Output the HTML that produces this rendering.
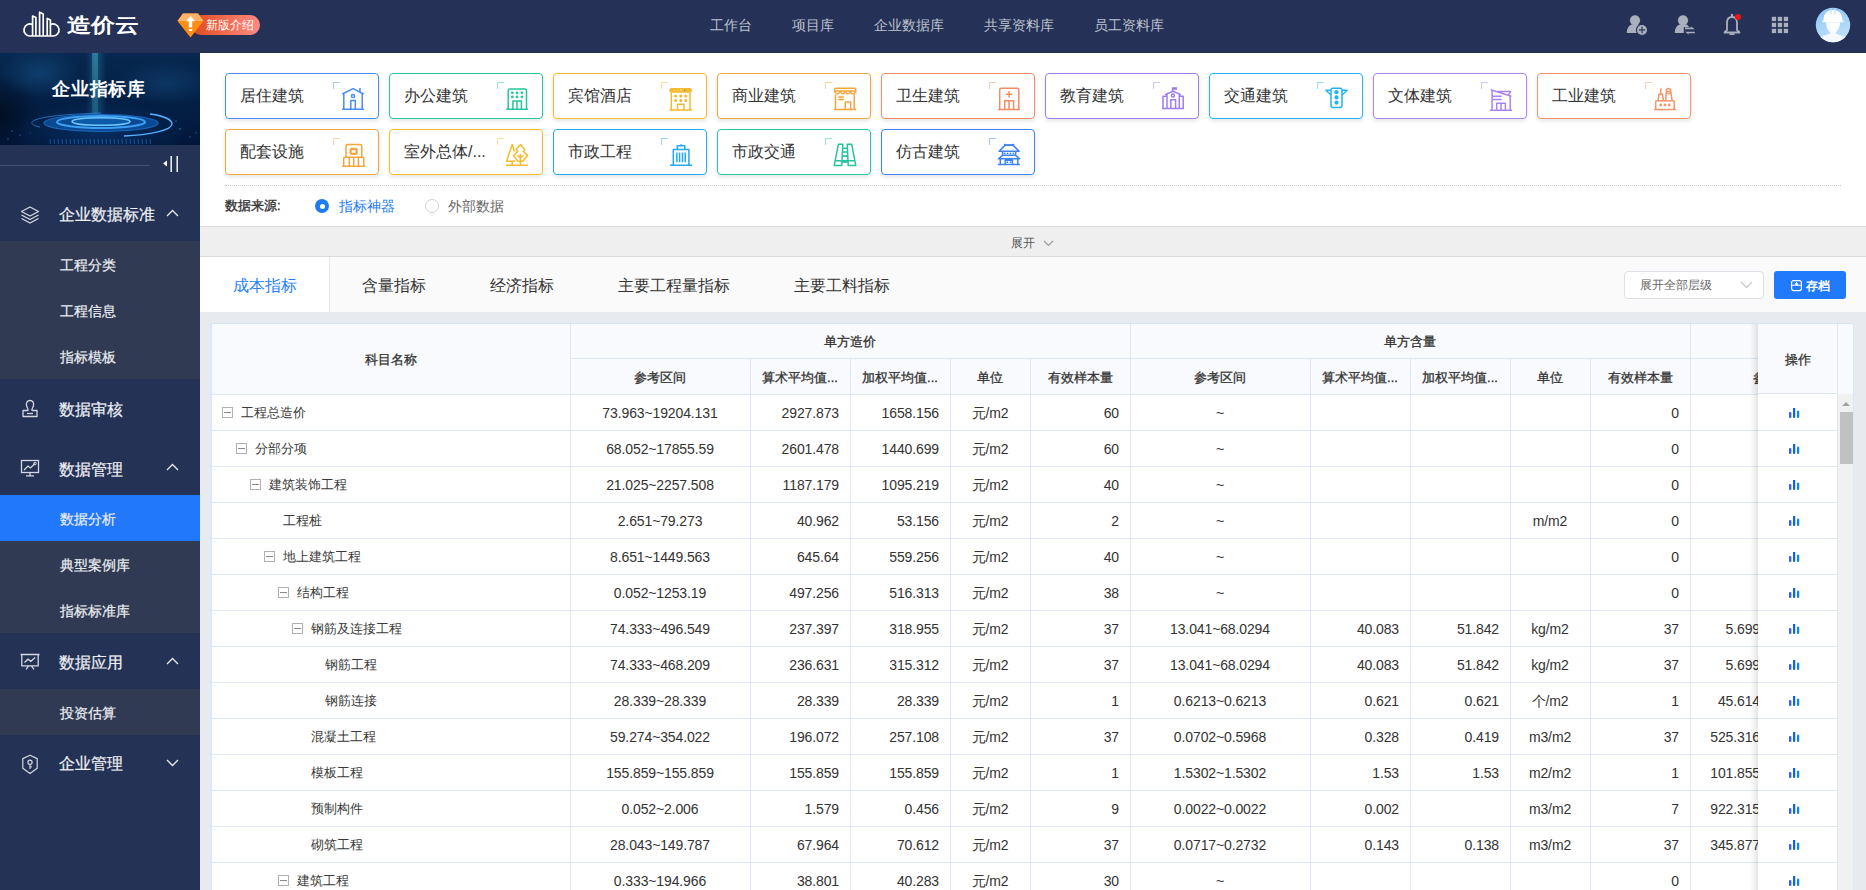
<!DOCTYPE html><html><head><meta charset="utf-8"><style>
*{box-sizing:border-box;margin:0;padding:0}
html,body{width:1866px;height:890px;overflow:hidden;background:#e7eaef;font-family:"Liberation Sans",sans-serif;color:#333}
.abs{position:absolute}
.t{position:absolute;white-space:nowrap;line-height:20px}
#top{position:absolute;left:0;top:0;width:1866px;height:53px;background:#253156}
#side{position:absolute;left:0;top:53px;width:200px;height:837px;background:#243256}
.nav{position:absolute;top:15px;font-size:14px;color:#bcc2d0;line-height:20px}
.card{position:absolute;width:154px;height:46px;border:1px solid;border-radius:4px;background:#fff;box-shadow:0 2px 4px rgba(0,0,0,.10)}
.card .lb{position:absolute;left:14px;top:12px;font-size:16px;line-height:20px;color:#333}
.card .cr{position:absolute;left:106.5px;top:8.2px;width:7.5px;height:7px;border-left:1.5px solid;border-top:1.5px solid;opacity:.45}
.card svg{position:absolute;left:115px;top:13px}
.menu{position:absolute;left:59px;font-size:16px;font-weight:500;color:#eef0f5;line-height:20px;-webkit-text-stroke:.2px #eef0f5}
.sub{position:absolute;left:60px;font-size:14px;font-weight:500;color:#eceef3;line-height:20px;-webkit-text-stroke:.2px #eceef3}
.tab{position:absolute;top:276px;font-size:16px;line-height:20px;color:#333}
.hc{position:absolute;font-size:13px;font-weight:500;-webkit-text-stroke:0.3px #333;color:#333;text-align:center;line-height:20px;white-space:nowrap}
.vl{position:absolute;width:1px;background:#dfe7f7}
.hl{position:absolute;height:1px;background:#dfe7f7}
.c{position:absolute;font-size:14px;letter-spacing:-0.12px;line-height:20px;color:#333;white-space:nowrap}
.nm{position:absolute;font-size:13px;line-height:20px;color:#3a3a3a;white-space:nowrap}
.bx{position:absolute;width:11px;height:11px;border:1px solid #b0b0b0}
.bx:after{content:"";position:absolute;left:1px;top:4px;width:7px;height:1px;background:#8a8a8a}
</style></head><body>

<div id="top">
<svg class="abs" style="left:22px;top:10px" width="40" height="28" viewBox="0 0 40 28">
<g fill="none" stroke="#fff" stroke-width="1.7" stroke-linejoin="round">
<path d="M10.6 14.6 A 6 6 0 1 0 8 26 H 31 A 6 6 0 1 0 28.4 14.6"/>
<path d="M10.6 26 V 6 L 13.9 7.6 V 26"/>
<path d="M17.6 26 V 2.2 L 21.2 4 V 26"/>
<path d="M25.2 26 V 8.4 L 28.4 10 V 26"/>
</g></svg>
<div class="t" style="left:67px;top:15px;font-size:20px;line-height:20px;font-weight:bold;color:#fff;transform:scaleX(1.2);transform-origin:0 0">造价云</div>
<div class="abs" style="left:191px;top:15px;width:69px;height:20px;border-radius:10px;background:linear-gradient(90deg,#de4a1e,#f4725a 60%,#ff8a84)"></div>
<svg class="abs" style="left:177px;top:13px" width="27" height="25" viewBox="0 0 27 25">
<path d="M6 0.5 H21 L26.5 8 L13.5 24.5 L0.5 8 Z" fill="#ff8f14"/>
<path d="M6 0.5 H21 L26.5 8 H0.5 Z" fill="#ffb366"/>
<path d="M13.5 3 L18 8.2 H15.2 V14.5 H11.8 V8.2 H9 Z" fill="#fff"/>
<rect x="11.8" y="16" width="3.4" height="2" fill="#fff"/>
</svg>
<div class="t" style="left:206px;top:15px;font-size:12px;color:#fff">新版介绍</div>
<div class="nav" style="left:710px">工作台</div>
<div class="nav" style="left:792px">项目库</div>
<div class="nav" style="left:874px">企业数据库</div>
<div class="nav" style="left:984px">共享资料库</div>
<div class="nav" style="left:1094px">员工资料库</div>
<svg class="abs" style="left:1620px;top:8px" width="32" height="32" viewBox="0 0 32 32">
<circle cx="15" cy="12.3" r="5.1" fill="#a9afbd"/>
<path d="M6.8 25 C6.8 19.5 9.5 16.5 13 16.2 H17.5 C19 16.5 20 17.2 20.5 18 C17.5 19.5 16.5 22 17 25 Z" fill="#a9afbd"/>
<circle cx="22" cy="22" r="5.6" fill="#a9afbd" stroke="#253156" stroke-width="1.1"/>
<path d="M22 18.8 V25.2 M18.8 22 H25.2" stroke="#3d4866" stroke-width="1.4"/>
</svg>
<svg class="abs" style="left:1668px;top:8px" width="32" height="32" viewBox="0 0 32 32">
<circle cx="15" cy="12.3" r="5.1" fill="#a9afbd"/>
<path d="M6.8 25 C6.8 19.5 9.5 16.5 13 16.2 H17.5 C19 16.5 20 17.2 21 18.5 L17.5 20.5 C16.5 22 16.3 23.5 16.5 25 Z" fill="#a9afbd"/>
<path d="M15.8 19.2 H27.5 V26.8 H15.8 Z" fill="#253156"/>
<path d="M17 19.6 H23.5 L23 18.2 L26.8 21.2 H17 Z" fill="#a9afbd"/>
<path d="M26.8 23.7 H20.3 L20.8 25.1 L17 22.1 H26.8 Z" fill="#a9afbd" transform="translate(0,1.6)"/>
</svg>
<svg class="abs" style="left:1722px;top:13px" width="22" height="23" viewBox="0 0 22 23">
<path d="M10 4 C6.5 4 5 6.5 5 10 V17 L2.5 19.5 H17.5 L15 17 V10 C15 6.5 13.5 4 10 4 Z" fill="none" stroke="#a9afbd" stroke-width="1.8" stroke-linejoin="round"/>
<path d="M8.2 21.2 H11.8" stroke="#a9afbd" stroke-width="1.8" stroke-linecap="round"/>
<path d="M10 1.8 V4" stroke="#a9afbd" stroke-width="2.2" stroke-linecap="round"/>
<circle cx="16" cy="4.1" r="3" fill="#f01414"/>
</svg>
<svg class="abs" style="left:1771px;top:16px" width="19" height="18" viewBox="0 0 19 18">
<g fill="#a9afbd">
<rect x="0.8" y="0.8" width="4.3" height="4.3"/>
<rect x="6.8" y="0.8" width="4.3" height="4.3"/>
<rect x="12.8" y="0.8" width="4.3" height="4.3"/>
<rect x="0.8" y="6.8" width="4.3" height="4.3"/>
<rect x="6.8" y="6.8" width="4.3" height="4.3"/>
<rect x="12.8" y="6.8" width="4.3" height="4.3"/>
<rect x="0.8" y="12.8" width="4.3" height="4.3"/>
<rect x="6.8" y="12.8" width="4.3" height="4.3"/>
<rect x="12.8" y="12.8" width="4.3" height="4.3"/>
</g></svg>
<svg class="abs" style="left:1815px;top:7px" width="36" height="36" viewBox="0 0 36 36">
<defs><linearGradient id="av" x1="0" y1="0" x2="0.3" y2="1"><stop offset="0" stop-color="#86c4f6"/><stop offset="1" stop-color="#c2e1fb"/></linearGradient>
<linearGradient id="av2" x1="0" y1="0" x2="0" y2="1"><stop offset="0" stop-color="#fff"/><stop offset="1" stop-color="#eef6fe"/></linearGradient>
<clipPath id="avc"><circle cx="18" cy="18" r="17.2"/></clipPath></defs>
<circle cx="18" cy="18" r="17.2" fill="url(#av)"/>
<g clip-path="url(#avc)">
<path d="M8.5 13.5 C8.5 7 12 3 18 3 C24 3 27.5 7 27.5 13.5 H28.5 V15.2 H7.5 V13.5 Z" fill="#fff"/>
<path d="M16 1 V7.5 M20 1 V7.5" stroke="#bfe0fb" stroke-width="1.2"/>
<path d="M11 15.2 H25 C25 19.5 23.5 23 20.4 26.2 C23.5 28 29 29 34 31.5 V40 H2 V31.5 C7 29 12.5 28 15.6 26.2 C12.5 23 11 19.5 11 15.2 Z" fill="url(#av2)"/>
</g>
</svg>
</div>
<div id="side"></div>
<div class="abs" style="left:0;top:53px;width:200px;height:92px;overflow:hidden;background:
radial-gradient(ellipse 40px 25px at 40px 20px,rgba(30,110,170,.35),rgba(30,110,170,0)),
radial-gradient(ellipse 50px 22px at 165px 30px,rgba(30,100,160,.30),rgba(30,100,160,0)),
radial-gradient(ellipse 90px 30px at 100px 78px,rgba(10,70,140,.45),rgba(10,70,140,0)),
radial-gradient(ellipse 40px 40px at 0px 60px,rgba(0,5,15,.6),rgba(0,5,15,0)),
linear-gradient(180deg,#072850 0%,#042046 50%,#02173a 100%)">
<div class="abs" style="left:86px;top:0;width:20px;height:78px;background:linear-gradient(90deg,rgba(40,150,200,0),rgba(60,180,220,.28),rgba(40,150,200,0))"></div>
<div class="abs" style="left:92px;top:0;width:6px;height:70px;background:linear-gradient(180deg,rgba(90,210,230,.35),rgba(90,210,230,.10))"></div>
<svg class="abs" style="left:0;top:0" width="200" height="92" viewBox="0 0 200 92">
<path d="M40 74 C 22 70, 30 62, 101 60" stroke="#2a7fd0" stroke-width="1" fill="none" opacity=".8"/>
<ellipse cx="101" cy="70" rx="57" ry="8.5" fill="#0b4a93"/>
<ellipse cx="101" cy="70" rx="57" ry="8.5" fill="none" stroke="#1c66b8" stroke-width="1.2"/>
<ellipse cx="101" cy="69" rx="44" ry="6" fill="none" stroke="#3d9ff2" stroke-width="2.2"/>
<ellipse cx="101" cy="68.5" rx="29" ry="3.8" fill="#0c5aa8" stroke="#6cc6ff" stroke-width="1.6"/>
<path d="M124 83 C150 82 172 77 172 71 C172 67 165 63 150 61" stroke="#5ab0ff" stroke-width="1.4" fill="none"/>
<g stroke="#2a78c8" stroke-width="1.2" opacity=".5">
<line x1="50" y1="86" x2="50.4" y2="91"/>
<line x1="54" y1="86" x2="54.4" y2="91"/>
<line x1="58" y1="86" x2="58.4" y2="91"/>
<line x1="62" y1="86" x2="62.4" y2="91"/>
<line x1="66" y1="86" x2="66.4" y2="91"/>
<line x1="70" y1="86" x2="70.4" y2="91"/>
<line x1="74" y1="86" x2="74.4" y2="91"/>
<line x1="78" y1="86" x2="78.4" y2="91"/>
<line x1="82" y1="86" x2="82.4" y2="91"/>
<line x1="86" y1="86" x2="86.4" y2="91"/>
<line x1="90" y1="86" x2="90.4" y2="91"/>
<line x1="94" y1="86" x2="94.4" y2="91"/>
<line x1="98" y1="86" x2="98.4" y2="91"/>
<line x1="102" y1="86" x2="102.4" y2="91"/>
<line x1="106" y1="86" x2="106.4" y2="91"/>
<line x1="110" y1="86" x2="110.4" y2="91"/>
<line x1="114" y1="86" x2="114.4" y2="91"/>
<line x1="118" y1="86" x2="118.4" y2="91"/>
<line x1="122" y1="86" x2="122.4" y2="91"/>
<line x1="126" y1="86" x2="126.4" y2="91"/>
<line x1="130" y1="86" x2="130.4" y2="91"/>
<line x1="134" y1="86" x2="134.4" y2="91"/>
<line x1="138" y1="86" x2="138.4" y2="91"/>
<line x1="142" y1="86" x2="142.4" y2="91"/>
<line x1="146" y1="86" x2="146.4" y2="91"/>
<line x1="150" y1="86" x2="150.4" y2="91"/>
</g>
<g fill="#4aa0e0" opacity=".5"><circle cx="12" cy="78" r=".8"/><circle cx="20" cy="82" r=".7"/><circle cx="8" cy="86" r=".8"/><circle cx="30" cy="80" r=".6"/><circle cx="180" cy="76" r=".9"/><circle cx="190" cy="84" r=".8"/><circle cx="196" cy="80" r=".7"/><circle cx="176" cy="68" r=".8"/></g>
</svg>
<div class="t" style="left:52px;top:26px;font-size:18px;line-height:20px;font-weight:bold;color:#fff;letter-spacing:.8px">企业指标库</div>
</div>
<div class="abs" style="left:0;top:165px;width:150px;height:1px;background:#45506f"></div>
<svg class="abs" style="left:162px;top:155px" width="18" height="18" viewBox="0 0 18 18">
<path d="M1 8.5 L5 5.5 V11.5 Z" fill="#fff"/><rect x="8.5" y="1" width="1.4" height="16" fill="#fff"/><rect x="14.5" y="1" width="1.4" height="16" fill="#fff"/>
</svg>
<div class="abs" style="left:0;top:241px;width:200px;height:138px;background:#303a52"></div>
<div class="abs" style="left:0;top:495px;width:200px;height:138px;background:#303a52"></div>
<div class="abs" style="left:0;top:495px;width:200px;height:46px;background:#2178fb"></div>
<div class="abs" style="left:0;top:689px;width:200px;height:46px;background:#303a52"></div>
<div class="menu" style="top:205.2px">企业数据标准</div>
<div class="menu" style="top:399.7px">数据审核</div>
<div class="menu" style="top:459.7px">数据管理</div>
<div class="menu" style="top:653.2px">数据应用</div>
<div class="menu" style="top:754.2px">企业管理</div>
<div class="sub" style="top:254.5px">工程分类</div>
<div class="sub" style="top:300.5px">工程信息</div>
<div class="sub" style="top:346.5px">指标模板</div>
<div class="sub" style="top:508.5px">数据分析</div>
<div class="sub" style="top:554.5px">典型案例库</div>
<div class="sub" style="top:600.5px">指标标准库</div>
<div class="sub" style="top:702.5px">投资估算</div>
<svg class="abs" style="left:166px;top:209px" width="13" height="9" viewBox="0 0 13 9"><path d="M1 7 L6.5 1.5 L12 7" stroke="#e6e8ee" stroke-width="1.4" fill="none"/></svg>
<svg class="abs" style="left:166px;top:463px" width="13" height="9" viewBox="0 0 13 9"><path d="M1 7 L6.5 1.5 L12 7" stroke="#e6e8ee" stroke-width="1.4" fill="none"/></svg>
<svg class="abs" style="left:166px;top:657px" width="13" height="9" viewBox="0 0 13 9"><path d="M1 7 L6.5 1.5 L12 7" stroke="#e6e8ee" stroke-width="1.4" fill="none"/></svg>
<svg class="abs" style="left:166px;top:758px" width="13" height="9" viewBox="0 0 13 9"><path d="M1 2 L6.5 7.5 L12 2" stroke="#e6e8ee" stroke-width="1.4" fill="none"/></svg>
<svg class="abs" style="left:20px;top:206px" width="20" height="19" viewBox="0 0 20 19">
<path d="M10 1 L18.5 5.5 L10 10 L1.5 5.5 Z" fill="none" stroke="#d4d8e2" stroke-width="1.3" stroke-linejoin="round"/>
<path d="M1.5 9 L10 13.5 L18.5 9" fill="none" stroke="#d4d8e2" stroke-width="1.3" stroke-linejoin="round"/>
<path d="M1.5 12.5 L10 17 L18.5 12.5" fill="none" stroke="#d4d8e2" stroke-width="1.3" stroke-linejoin="round"/>
</svg>
<svg class="abs" style="left:20px;top:399px" width="20" height="20" viewBox="0 0 20 20">
<path d="M10 1.5 C7 1.5 6 4 6.5 6.5 C7 8.5 8.5 9.5 8 11.5 H3 V17.5 H17 V11.5 H12 C11.5 9.5 13 8.5 13.5 6.5 C14 4 13 1.5 10 1.5 Z" fill="none" stroke="#d4d8e2" stroke-width="1.3" stroke-linejoin="round"/>
<path d="M7 14.5 H13" stroke="#d4d8e2" stroke-width="1.3"/>
</svg>
<svg class="abs" style="left:20px;top:459px" width="20" height="18" viewBox="0 0 20 18">
<rect x="1.5" y="1.5" width="17" height="12" fill="none" stroke="#d4d8e2" stroke-width="1.3"/>
<path d="M4 11 L8 7 L10.5 9 L15 4.5" fill="none" stroke="#d4d8e2" stroke-width="1.3"/>
<circle cx="15" cy="4.5" r="1.3" fill="none" stroke="#d4d8e2" stroke-width="1"/>
<path d="M10 13.5 V16.5 M6 16.8 H14" stroke="#d4d8e2" stroke-width="1.3"/>
</svg>
<svg class="abs" style="left:20px;top:653px" width="20" height="18" viewBox="0 0 20 18">
<path d="M0.5 1.5 H19.5 M1.8 1.5 V12.8 H18.2 V1.5" fill="none" stroke="#d4d8e2" stroke-width="1.3"/>
<path d="M4.5 9.5 L8 6.2 L10.8 8.3 L15.2 4.5" fill="none" stroke="#d4d8e2" stroke-width="1.3"/>
<path d="M8.5 12.8 L6 16.5 M11.5 12.8 L14 16.5" stroke="#d4d8e2" stroke-width="1.3"/>
</svg>
<svg class="abs" style="left:21px;top:754px" width="18" height="21" viewBox="0 0 18 21">
<path d="M9 1.2 L16.2 4.6 V14.2 L9 19.6 L1.8 14.2 V4.6 Z" fill="none" stroke="#d4d8e2" stroke-width="1.2" stroke-linejoin="round"/>
<circle cx="9" cy="8.3" r="2.1" fill="none" stroke="#d4d8e2" stroke-width="1.2"/>
<path d="M9 10.4 V15 M9 12.8 H10.8" stroke="#d4d8e2" stroke-width="1.2"/>
</svg>
<div class="abs" style="left:200px;top:53px;width:1666px;height:173px;background:#fff"></div>
<div class="card" style="left:225px;top:73px;border-color:#4a8cf5"><div class="lb">居住建筑</div><div class="cr" style="border-color:#4a8cf5"></div><svg width="24" height="24" viewBox="0 0 24 24"><path d="M1 22.3 H23 M2.8 22.3 V6.8 M21.2 22.3 V6.8 M1.3 7 L12 1.6 L22.7 7 M19 4.8 V1 M9.8 22.3 V13.6 H14.3 V22.3" stroke="#4a8cf5" stroke-width="1.5" fill="none" stroke-linejoin="round"/><circle cx="12" cy="9" r="1.6" stroke="#4a8cf5" stroke-width="1.5" fill="none" stroke-linejoin="round"/></svg></div>
<div class="card" style="left:389px;top:73px;border-color:#27c4a2"><div class="lb">办公建筑</div><div class="cr" style="border-color:#27c4a2"></div><svg width="24" height="24" viewBox="0 0 24 24"><path d="M1.2 22.3 H23 M3.2 22.3 V3.5 Q3.2 2 4.7 2 H20 Q21.5 2 21.5 3.5 V22.3 M7.9 22.3 V14 H16.4 V22.3 M12 14 V22.3" stroke="#27c4a2" stroke-width="1.5" fill="none" stroke-linejoin="round"/><circle cx="7.3" cy="5.8" r="1.4" fill="#27c4a2"/><circle cx="12" cy="5.8" r="1.4" fill="#27c4a2"/><circle cx="16.9" cy="5.8" r="1.4" fill="#27c4a2"/><circle cx="7.3" cy="9.9" r="1.4" fill="#27c4a2"/><circle cx="12" cy="9.9" r="1.4" fill="#27c4a2"/><circle cx="16.9" cy="9.9" r="1.4" fill="#27c4a2"/></svg></div>
<div class="card" style="left:553px;top:73px;border-color:#f5b82e"><div class="lb">宾馆酒店</div><div class="cr" style="border-color:#f5b82e"></div><svg width="24" height="24" viewBox="0 0 24 24"><path d="M0.5 23 H23 M2.3 5.8 V23 M21 5.8 V23 M8.6 23 V17.3 H15 V23" stroke="#f5b82e" stroke-width="1.5" fill="none" stroke-linejoin="round"/><rect x="0.3" y="1" width="22.6" height="4.8" rx="2" fill="#f5b82e"/><path d="M5 3.4 H7 M9 2.5 V4.4 M11 2.5 H13 M12 2.5 V4.4 M15 2.5 V4.4 H17" stroke="#fff" stroke-width=".6" opacity=".7"/><circle cx="6.6" cy="9.1" r="1.5" fill="#f5b82e"/><circle cx="11.8" cy="9.1" r="1.5" fill="#f5b82e"/><circle cx="16.8" cy="9.1" r="1.5" fill="#f5b82e"/><circle cx="6.6" cy="13.5" r="1.5" fill="#f5b82e"/><circle cx="11.8" cy="13.5" r="1.5" fill="#f5b82e"/><circle cx="16.8" cy="13.5" r="1.5" fill="#f5b82e"/></svg></div>
<div class="card" style="left:717px;top:73px;border-color:#f5a53d"><div class="lb">商业建筑</div><div class="cr" style="border-color:#f5a53d"></div><svg width="24" height="24" viewBox="0 0 24 24"><path d="M1 22.4 H23 M2.5 7.5 V22.4 M21.2 7.5 V22.4 M1.8 5.5 V2.2 Q1.8 1.2 2.8 1.2 H21.8 Q22.8 1.2 22.8 2.2 V5.5 M1.8 4 H22.8 M1.8 4.5 Q4.5 9.5 7.2 4.5 Q9.9 9.5 12.3 4.5 Q14.7 9.5 17.3 4.5 Q20 9.5 22.8 4.5 M5.2 9.9 H10.8 M5.2 12.6 H10.8 M12.3 22.4 V15.1 H17.7 V22.4" stroke="#f5a53d" stroke-width="1.5" fill="none" stroke-linejoin="round"/></svg></div>
<div class="card" style="left:881px;top:73px;border-color:#f68b64"><div class="lb">卫生建筑</div><div class="cr" style="border-color:#f68b64"></div><svg width="24" height="24" viewBox="0 0 24 24"><path d="M1 22.4 H23 M2.7 22.4 V2.8 Q2.7 1.3 4.2 1.3 H20.3 Q21.8 1.3 21.8 2.8 V22.4 M7.7 22.4 V13.7 H16.6 V22.4 M12 13.7 V22.4 M12.1 4 V10.4 M8.8 7.2 H15.4" stroke="#f68b64" stroke-width="1.5" fill="none" stroke-linejoin="round"/></svg></div>
<div class="card" style="left:1045px;top:73px;border-color:#9d7cf2"><div class="lb">教育建筑</div><div class="cr" style="border-color:#9d7cf2"></div><svg width="24" height="24" viewBox="0 0 24 24"><path d="M1 21.4 H23 M4 7.6 L12 4.3 L20 7.6 M6 7.2 V21.4 M18.3 7.2 V21.4 M2 21.4 V9.3 H6 M22.2 21.4 V9.3 H18.3 M9.8 21.4 V12.8 H14.6 V21.4 M11.6 4 V0.5" stroke="#9d7cf2" stroke-width="1.5" fill="none" stroke-linejoin="round"/><rect x="11.6" y="0.2" width="4.4" height="2.6" fill="#9d7cf2"/><circle cx="12" cy="8.5" r="1.5" stroke="#9d7cf2" stroke-width="1.5" fill="none" stroke-linejoin="round"/></svg></div>
<div class="card" style="left:1209px;top:73px;border-color:#22b4ee"><div class="lb">交通建筑</div><div class="cr" style="border-color:#22b4ee"></div><svg width="24" height="24" viewBox="0 0 24 24"><rect x="6" y="1.2" width="11" height="19.2" rx="1.8" stroke="#22b4ee" stroke-width="1.5" fill="none" stroke-linejoin="round"/><path d="M6 3.3 H0.9 L6 8 M17 3.3 H22.1 L17 8" stroke="#22b4ee" stroke-width="1.5" fill="none" stroke-linejoin="round"/><circle cx="11.5" cy="5.2" r="2.1" fill="#22b4ee"/><circle cx="11.5" cy="10.4" r="2.1" fill="#22b4ee"/><circle cx="11.5" cy="15.6" r="2.1" fill="#22b4ee"/></svg></div>
<div class="card" style="left:1373px;top:73px;border-color:#a884f0"><div class="lb">文体建筑</div><div class="cr" style="border-color:#a884f0"></div><svg width="24" height="24" viewBox="0 0 24 24"><path d="M1 23.2 H23 M1.7 2.7 L22.4 9.3 M8.3 4.6 H21.6 L19.5 7.9 M3.1 3.2 V23.2 M21.2 9 V23.2 M3.3 9.3 H12.7 M3.3 12.4 H12.7 M7.7 23.2 V16.2 H16.4 V23.2 M12 16.2 V23.2" stroke="#a884f0" stroke-width="1.5" fill="none" stroke-linejoin="round"/></svg></div>
<div class="card" style="left:1537px;top:73px;border-color:#f69468"><div class="lb">工业建筑</div><div class="cr" style="border-color:#f69468"></div><svg width="24" height="24" viewBox="0 0 24 24"><path d="M1 22.4 H23 M2.7 22.4 V14.8 Q2.7 13.7 3.8 13.7 H20.1 Q21.2 13.7 21.2 14.8 V22.4 M5 13.7 L6 7.2 H9.5 L10.4 13.7 M7.9 7 Q7 4 8.3 1.4 M12.7 13.7 L13.5 2.6 Q13.7 1.4 15.5 1.4 Q17.3 1.4 17.5 2.6 L19.1 13.7 M14 4.6 H17.5 M14.2 6.5 H17.3" stroke="#f69468" stroke-width="1.5" fill="none" stroke-linejoin="round"/><circle cx="7.7" cy="18" r="1.4" fill="#f69468"/><circle cx="12" cy="18" r="1.4" fill="#f69468"/><circle cx="16.2" cy="18" r="1.4" fill="#f69468"/></svg></div>
<div class="card" style="left:225px;top:129px;border-color:#f5a63c"><div class="lb">配套设施</div><div class="cr" style="border-color:#f5a63c"></div><svg width="24" height="24" viewBox="0 0 24 24"><path d="M1 23.2 H24 M5 14 V3 Q5 1.4 6.6 1.4 H19.2 Q20.8 1.4 20.8 3 V14 M2.7 23.2 V15.4 Q2.7 14.3 3.8 14.3 H21.7 Q22.8 14.3 22.8 15.4 V23.2 M8.3 14.3 V23.2 M12.7 14.3 V23.2 M17.4 14.3 V23.2" stroke="#f5a63c" stroke-width="1.5" fill="none" stroke-linejoin="round"/><rect x="9.6" y="5.8" width="6.1" height="5.1" rx="1" stroke="#f5a63c" stroke-width="2.2" fill="none"/></svg></div>
<div class="card" style="left:389px;top:129px;border-color:#f5bd2a"><div class="lb">室外总体/...</div><div class="cr" style="border-color:#f5bd2a"></div><svg width="24" height="24" viewBox="0 0 24 24"><path d="M1 22.2 H23 M7.25 18.2 V22.2 M15.4 11 V22.2 M12.4 12.4 L15.4 14.7 L18.5 12.4 M9.3 8.5 L7.25 1.4 L1.6 18.2 H10.4 M15.4 1.6 L19.7 6.6 L18.3 8.5 L22.6 12.6 L17.6 18.2 H12.9 L8.5 12.6 L12.7 8.5 L11 6.6 Z" stroke="#f5bd2a" stroke-width="1.5" fill="none" stroke-linejoin="round"/></svg></div>
<div class="card" style="left:553px;top:129px;border-color:#23a9f2"><div class="lb">市政工程</div><div class="cr" style="border-color:#23a9f2"></div><svg width="24" height="24" viewBox="0 0 24 24"><path d="M1 22.2 H23 M4.3 22.2 V6.4 H19.9 V22.2 M8.3 6.4 V2.8 H15.8 V6.4 M12 2.8 V1.2 M7.9 9.5 V19.3 M10.6 9.5 V19.3 M13.5 9.5 V19.3 M16.2 9.5 V19.3" stroke="#23a9f2" stroke-width="1.5" fill="none" stroke-linejoin="round"/></svg></div>
<div class="card" style="left:717px;top:129px;border-color:#27c4a2"><div class="lb">市政交通</div><div class="cr" style="border-color:#27c4a2"></div><svg width="24" height="24" viewBox="0 0 24 24"><path d="M5.4 1.2 H9.8 L8.8 22.6 H1.2 Z M18.7 1.2 H14.2 L15.2 22.6 H22.8 Z M2.3 17.8 H21.7" stroke="#27c4a2" stroke-width="1.5" fill="none" stroke-linejoin="round"/><rect x="9.4" y="4.6" width="5.2" height="1.5" fill="#27c4a2"/><rect x="9.2" y="8.2" width="5.6" height="1.6" fill="#27c4a2"/><rect x="9" y="12.2" width="6" height="1.8" fill="#27c4a2"/><rect x="8.9" y="17" width="6.2" height="2.8" fill="#27c4a2"/></svg></div>
<div class="card" style="left:881px;top:129px;border-color:#3f82f3"><div class="lb">仿古建筑</div><div class="cr" style="border-color:#3f82f3"></div><svg width="24" height="24" viewBox="0 0 24 24"><path d="M1 21.4 H23 M7.3 1 Q8 2.2 9 2.2 H15 Q16 2.2 16.8 1 M7.9 2.4 L2.1 8.3 H22.2 L16.2 2.4 M5.6 8.3 V12.2 H18.7 V8.3 M5.6 12.4 L1.4 15.8 H22.6 L18.7 12.4 M3.3 15.8 V21.4 M20.8 15.8 V21.4 M8.3 21.4 V17.2 H15.4 V21.4" stroke="#3f82f3" stroke-width="1.5" fill="none" stroke-linejoin="round"/><rect x="7.9" y="1.2" width="8.6" height="1.4" fill="#3f82f3"/><circle cx="7.7" cy="10.3" r=".9" fill="#3f82f3"/><circle cx="10.6" cy="10.3" r=".9" fill="#3f82f3"/><circle cx="13.5" cy="10.3" r=".9" fill="#3f82f3"/><circle cx="16.4" cy="10.3" r=".9" fill="#3f82f3"/><rect x="9.6" y="18.4" width="1.6" height="1.6" fill="#3f82f3"/><rect x="12.8" y="18.4" width="1.6" height="1.6" fill="#3f82f3"/></svg></div>
<div class="abs" style="left:225px;top:185px;width:1616px;height:1px;border-top:1px dotted #c8c8c8"></div>
<div class="t" style="left:225px;top:196px;font-size:13px;font-weight:500;-webkit-text-stroke:.35px #333;color:#333">数据来源:</div>
<div class="abs" style="left:315px;top:199px;width:14px;height:14px;border-radius:50%;background:#1e7bf5"></div>
<div class="abs" style="left:319.5px;top:203.5px;width:5px;height:5px;border-radius:50%;background:#fff"></div>
<div class="t" style="left:339px;top:196px;font-size:14px;color:#1e7bf5">指标神器</div>
<div class="abs" style="left:425px;top:199px;width:14px;height:14px;border-radius:50%;border:1px solid #d0d0d0;background:#fff"></div>
<div class="t" style="left:448px;top:196px;font-size:14px;color:#666">外部数据</div>
<div class="abs" style="left:200px;top:226px;width:1666px;height:31px;background:#efefef;border-top:1px solid #dcdcdc;border-bottom:1px solid #dcdcdc"></div>
<div class="t" style="left:1011px;top:233px;font-size:12px;color:#555">展开</div>
<svg class="abs" style="left:1043px;top:240px" width="11" height="7" viewBox="0 0 11 7"><path d="M1 1 L5.5 5.5 L10 1" stroke="#999" stroke-width="1.1" fill="none"/></svg>
<div class="abs" style="left:200px;top:257px;width:1666px;height:55px;background:#fafafa"></div>
<div class="abs" style="left:200px;top:257px;width:130px;height:55px;background:#fff;border-right:1px solid #e8e8e8"></div>
<div class="tab" style="left:233px;color:#2a7ff8">成本指标</div>
<div class="tab" style="left:362px;color:#333">含量指标</div>
<div class="tab" style="left:490px;color:#333">经济指标</div>
<div class="tab" style="left:618px;color:#333">主要工程量指标</div>
<div class="tab" style="left:794px;color:#333">主要工料指标</div>
<div class="abs" style="left:1624px;top:271px;width:140px;height:28px;border:1px solid #dcdfe6;border-radius:4px;background:#fff"></div>
<div class="t" style="left:1640px;top:275px;font-size:12px;color:#666">展开全部层级</div>
<svg class="abs" style="left:1740px;top:281px" width="13" height="8" viewBox="0 0 13 8"><path d="M1 1 L6.5 6.5 L12 1" stroke="#c0c4cc" stroke-width="1.1" fill="none"/></svg>
<div class="abs" style="left:1774px;top:271px;width:72px;height:28px;border-radius:3px;background:#2179fb"></div>
<svg class="abs" style="left:1790px;top:279px" width="13" height="13" viewBox="0 0 13 13"><rect x="1.6" y="1.6" width="9.8" height="10" rx="2" stroke="#fff" stroke-width="1.2" fill="none"/><path d="M1.6 6.3 H11.4 M6.5 3 V5.6 M5 4.5 L6.5 5.8 L8 4.5" stroke="#fff" stroke-width="1.1" fill="none"/></svg>
<div class="t" style="left:1806px;top:276px;font-size:12px;color:#fff;font-weight:bold">存档</div>
<div class="abs" style="left:210px;top:323px;width:2px;height:567px;background:#dde7fa"></div>
<div class="abs" style="left:212px;top:323px;width:1642px;height:567px;background:#fff;overflow:hidden">
<div class="abs" style="left:0;top:0;width:1642px;height:71px;background:#f9fafd"></div>
<div class="hc" style="left:0px;width:358px;top:27px">科目名称</div>
<div class="hc" style="left:358px;width:560px;top:9px">单方造价</div>
<div class="hc" style="left:918px;width:560px;top:9px">单方含量</div>
<div class="hc" style="left:358px;width:180px;top:45px">参考区间</div>
<div class="hc" style="left:538px;width:100px;top:45px">算术平均值...</div>
<div class="hc" style="left:638px;width:100px;top:45px">加权平均值...</div>
<div class="hc" style="left:738px;width:80px;top:45px">单位</div>
<div class="hc" style="left:818px;width:100px;top:45px">有效样本量</div>
<div class="hc" style="left:918px;width:180px;top:45px">参考区间</div>
<div class="hc" style="left:1098px;width:100px;top:45px">算术平均值...</div>
<div class="hc" style="left:1198px;width:100px;top:45px">加权平均值...</div>
<div class="hc" style="left:1298px;width:80px;top:45px">单位</div>
<div class="hc" style="left:1378px;width:100px;top:45px">有效样本量</div>
<div class="hc" style="left:1541px;width:82px;top:45px;text-align:left">参考区间</div>
<div class="hl" style="left:358px;top:35px;width:1202px"></div>
<div class="hl" style="left:0;top:71px;width:1642px"></div>
<div class="vl" style="left:358px;top:0;height:567px"></div>
<div class="vl" style="left:538px;top:35px;height:532px"></div>
<div class="vl" style="left:638px;top:35px;height:532px"></div>
<div class="vl" style="left:738px;top:35px;height:532px"></div>
<div class="vl" style="left:818px;top:35px;height:532px"></div>
<div class="vl" style="left:918px;top:0;height:567px"></div>
<div class="vl" style="left:1098px;top:35px;height:532px"></div>
<div class="vl" style="left:1198px;top:35px;height:532px"></div>
<div class="vl" style="left:1298px;top:35px;height:532px"></div>
<div class="vl" style="left:1378px;top:35px;height:532px"></div>
<div class="vl" style="left:1478px;top:0;height:567px"></div>
<div class="vl" style="left:1560px;top:35px;height:532px"></div>
<div class="hl" style="left:0;top:107px;width:1642px"></div>
<div class="bx" style="left:10px;top:84px"></div>
<div class="nm" style="left:29px;top:80px">工程总造价</div>
<div class="c" style="left:358px;width:180px;text-align:center;top:80px">73.963~19204.131</div>
<div class="c" style="left:538px;width:89px;text-align:right;top:80px">2927.873</div>
<div class="c" style="left:638px;width:89px;text-align:right;top:80px">1658.156</div>
<div class="c" style="left:738px;width:80px;text-align:center;top:80px">元/m2</div>
<div class="c" style="left:818px;width:89px;text-align:right;top:80px">60</div>
<div class="c" style="left:918px;width:180px;text-align:center;top:80px">~</div>
<div class="c" style="left:1378px;width:89px;text-align:right;top:80px">0</div>
<div class="hl" style="left:0;top:143px;width:1642px"></div>
<div class="bx" style="left:24px;top:120px"></div>
<div class="nm" style="left:43px;top:116px">分部分项</div>
<div class="c" style="left:358px;width:180px;text-align:center;top:116px">68.052~17855.59</div>
<div class="c" style="left:538px;width:89px;text-align:right;top:116px">2601.478</div>
<div class="c" style="left:638px;width:89px;text-align:right;top:116px">1440.699</div>
<div class="c" style="left:738px;width:80px;text-align:center;top:116px">元/m2</div>
<div class="c" style="left:818px;width:89px;text-align:right;top:116px">60</div>
<div class="c" style="left:918px;width:180px;text-align:center;top:116px">~</div>
<div class="c" style="left:1378px;width:89px;text-align:right;top:116px">0</div>
<div class="hl" style="left:0;top:179px;width:1642px"></div>
<div class="bx" style="left:38px;top:156px"></div>
<div class="nm" style="left:57px;top:152px">建筑装饰工程</div>
<div class="c" style="left:358px;width:180px;text-align:center;top:152px">21.025~2257.508</div>
<div class="c" style="left:538px;width:89px;text-align:right;top:152px">1187.179</div>
<div class="c" style="left:638px;width:89px;text-align:right;top:152px">1095.219</div>
<div class="c" style="left:738px;width:80px;text-align:center;top:152px">元/m2</div>
<div class="c" style="left:818px;width:89px;text-align:right;top:152px">40</div>
<div class="c" style="left:918px;width:180px;text-align:center;top:152px">~</div>
<div class="c" style="left:1378px;width:89px;text-align:right;top:152px">0</div>
<div class="hl" style="left:0;top:215px;width:1642px"></div>
<div class="nm" style="left:71px;top:188px">工程桩</div>
<div class="c" style="left:358px;width:180px;text-align:center;top:188px">2.651~79.273</div>
<div class="c" style="left:538px;width:89px;text-align:right;top:188px">40.962</div>
<div class="c" style="left:638px;width:89px;text-align:right;top:188px">53.156</div>
<div class="c" style="left:738px;width:80px;text-align:center;top:188px">元/m2</div>
<div class="c" style="left:818px;width:89px;text-align:right;top:188px">2</div>
<div class="c" style="left:918px;width:180px;text-align:center;top:188px">~</div>
<div class="c" style="left:1298px;width:80px;text-align:center;top:188px">m/m2</div>
<div class="c" style="left:1378px;width:89px;text-align:right;top:188px">0</div>
<div class="hl" style="left:0;top:251px;width:1642px"></div>
<div class="bx" style="left:52px;top:228px"></div>
<div class="nm" style="left:71px;top:224px">地上建筑工程</div>
<div class="c" style="left:358px;width:180px;text-align:center;top:224px">8.651~1449.563</div>
<div class="c" style="left:538px;width:89px;text-align:right;top:224px">645.64</div>
<div class="c" style="left:638px;width:89px;text-align:right;top:224px">559.256</div>
<div class="c" style="left:738px;width:80px;text-align:center;top:224px">元/m2</div>
<div class="c" style="left:818px;width:89px;text-align:right;top:224px">40</div>
<div class="c" style="left:918px;width:180px;text-align:center;top:224px">~</div>
<div class="c" style="left:1378px;width:89px;text-align:right;top:224px">0</div>
<div class="hl" style="left:0;top:287px;width:1642px"></div>
<div class="bx" style="left:66px;top:264px"></div>
<div class="nm" style="left:85px;top:260px">结构工程</div>
<div class="c" style="left:358px;width:180px;text-align:center;top:260px">0.052~1253.19</div>
<div class="c" style="left:538px;width:89px;text-align:right;top:260px">497.256</div>
<div class="c" style="left:638px;width:89px;text-align:right;top:260px">516.313</div>
<div class="c" style="left:738px;width:80px;text-align:center;top:260px">元/m2</div>
<div class="c" style="left:818px;width:89px;text-align:right;top:260px">38</div>
<div class="c" style="left:918px;width:180px;text-align:center;top:260px">~</div>
<div class="c" style="left:1378px;width:89px;text-align:right;top:260px">0</div>
<div class="hl" style="left:0;top:323px;width:1642px"></div>
<div class="bx" style="left:80px;top:300px"></div>
<div class="nm" style="left:99px;top:296px">钢筋及连接工程</div>
<div class="c" style="left:358px;width:180px;text-align:center;top:296px">74.333~496.549</div>
<div class="c" style="left:538px;width:89px;text-align:right;top:296px">237.397</div>
<div class="c" style="left:638px;width:89px;text-align:right;top:296px">318.955</div>
<div class="c" style="left:738px;width:80px;text-align:center;top:296px">元/m2</div>
<div class="c" style="left:818px;width:89px;text-align:right;top:296px">37</div>
<div class="c" style="left:918px;width:180px;text-align:center;top:296px">13.041~68.0294</div>
<div class="c" style="left:1098px;width:89px;text-align:right;top:296px">40.083</div>
<div class="c" style="left:1198px;width:89px;text-align:right;top:296px">51.842</div>
<div class="c" style="left:1298px;width:80px;text-align:center;top:296px">kg/m2</div>
<div class="c" style="left:1378px;width:89px;text-align:right;top:296px">37</div>
<div class="c" style="left:1478px;width:70px;text-align:right;top:296px">5.699</div>
<div class="hl" style="left:0;top:359px;width:1642px"></div>
<div class="nm" style="left:113px;top:332px">钢筋工程</div>
<div class="c" style="left:358px;width:180px;text-align:center;top:332px">74.333~468.209</div>
<div class="c" style="left:538px;width:89px;text-align:right;top:332px">236.631</div>
<div class="c" style="left:638px;width:89px;text-align:right;top:332px">315.312</div>
<div class="c" style="left:738px;width:80px;text-align:center;top:332px">元/m2</div>
<div class="c" style="left:818px;width:89px;text-align:right;top:332px">37</div>
<div class="c" style="left:918px;width:180px;text-align:center;top:332px">13.041~68.0294</div>
<div class="c" style="left:1098px;width:89px;text-align:right;top:332px">40.083</div>
<div class="c" style="left:1198px;width:89px;text-align:right;top:332px">51.842</div>
<div class="c" style="left:1298px;width:80px;text-align:center;top:332px">kg/m2</div>
<div class="c" style="left:1378px;width:89px;text-align:right;top:332px">37</div>
<div class="c" style="left:1478px;width:70px;text-align:right;top:332px">5.699</div>
<div class="hl" style="left:0;top:395px;width:1642px"></div>
<div class="nm" style="left:113px;top:368px">钢筋连接</div>
<div class="c" style="left:358px;width:180px;text-align:center;top:368px">28.339~28.339</div>
<div class="c" style="left:538px;width:89px;text-align:right;top:368px">28.339</div>
<div class="c" style="left:638px;width:89px;text-align:right;top:368px">28.339</div>
<div class="c" style="left:738px;width:80px;text-align:center;top:368px">元/m2</div>
<div class="c" style="left:818px;width:89px;text-align:right;top:368px">1</div>
<div class="c" style="left:918px;width:180px;text-align:center;top:368px">0.6213~0.6213</div>
<div class="c" style="left:1098px;width:89px;text-align:right;top:368px">0.621</div>
<div class="c" style="left:1198px;width:89px;text-align:right;top:368px">0.621</div>
<div class="c" style="left:1298px;width:80px;text-align:center;top:368px">个/m2</div>
<div class="c" style="left:1378px;width:89px;text-align:right;top:368px">1</div>
<div class="c" style="left:1478px;width:70px;text-align:right;top:368px">45.614</div>
<div class="hl" style="left:0;top:431px;width:1642px"></div>
<div class="nm" style="left:99px;top:404px">混凝土工程</div>
<div class="c" style="left:358px;width:180px;text-align:center;top:404px">59.274~354.022</div>
<div class="c" style="left:538px;width:89px;text-align:right;top:404px">196.072</div>
<div class="c" style="left:638px;width:89px;text-align:right;top:404px">257.108</div>
<div class="c" style="left:738px;width:80px;text-align:center;top:404px">元/m2</div>
<div class="c" style="left:818px;width:89px;text-align:right;top:404px">37</div>
<div class="c" style="left:918px;width:180px;text-align:center;top:404px">0.0702~0.5968</div>
<div class="c" style="left:1098px;width:89px;text-align:right;top:404px">0.328</div>
<div class="c" style="left:1198px;width:89px;text-align:right;top:404px">0.419</div>
<div class="c" style="left:1298px;width:80px;text-align:center;top:404px">m3/m2</div>
<div class="c" style="left:1378px;width:89px;text-align:right;top:404px">37</div>
<div class="c" style="left:1478px;width:70px;text-align:right;top:404px">525.316</div>
<div class="hl" style="left:0;top:467px;width:1642px"></div>
<div class="nm" style="left:99px;top:440px">模板工程</div>
<div class="c" style="left:358px;width:180px;text-align:center;top:440px">155.859~155.859</div>
<div class="c" style="left:538px;width:89px;text-align:right;top:440px">155.859</div>
<div class="c" style="left:638px;width:89px;text-align:right;top:440px">155.859</div>
<div class="c" style="left:738px;width:80px;text-align:center;top:440px">元/m2</div>
<div class="c" style="left:818px;width:89px;text-align:right;top:440px">1</div>
<div class="c" style="left:918px;width:180px;text-align:center;top:440px">1.5302~1.5302</div>
<div class="c" style="left:1098px;width:89px;text-align:right;top:440px">1.53</div>
<div class="c" style="left:1198px;width:89px;text-align:right;top:440px">1.53</div>
<div class="c" style="left:1298px;width:80px;text-align:center;top:440px">m2/m2</div>
<div class="c" style="left:1378px;width:89px;text-align:right;top:440px">1</div>
<div class="c" style="left:1478px;width:70px;text-align:right;top:440px">101.855</div>
<div class="hl" style="left:0;top:503px;width:1642px"></div>
<div class="nm" style="left:99px;top:476px">预制构件</div>
<div class="c" style="left:358px;width:180px;text-align:center;top:476px">0.052~2.006</div>
<div class="c" style="left:538px;width:89px;text-align:right;top:476px">1.579</div>
<div class="c" style="left:638px;width:89px;text-align:right;top:476px">0.456</div>
<div class="c" style="left:738px;width:80px;text-align:center;top:476px">元/m2</div>
<div class="c" style="left:818px;width:89px;text-align:right;top:476px">9</div>
<div class="c" style="left:918px;width:180px;text-align:center;top:476px">0.0022~0.0022</div>
<div class="c" style="left:1098px;width:89px;text-align:right;top:476px">0.002</div>
<div class="c" style="left:1298px;width:80px;text-align:center;top:476px">m3/m2</div>
<div class="c" style="left:1378px;width:89px;text-align:right;top:476px">7</div>
<div class="c" style="left:1478px;width:70px;text-align:right;top:476px">922.315</div>
<div class="hl" style="left:0;top:539px;width:1642px"></div>
<div class="nm" style="left:99px;top:512px">砌筑工程</div>
<div class="c" style="left:358px;width:180px;text-align:center;top:512px">28.043~149.787</div>
<div class="c" style="left:538px;width:89px;text-align:right;top:512px">67.964</div>
<div class="c" style="left:638px;width:89px;text-align:right;top:512px">70.612</div>
<div class="c" style="left:738px;width:80px;text-align:center;top:512px">元/m2</div>
<div class="c" style="left:818px;width:89px;text-align:right;top:512px">37</div>
<div class="c" style="left:918px;width:180px;text-align:center;top:512px">0.0717~0.2732</div>
<div class="c" style="left:1098px;width:89px;text-align:right;top:512px">0.143</div>
<div class="c" style="left:1198px;width:89px;text-align:right;top:512px">0.138</div>
<div class="c" style="left:1298px;width:80px;text-align:center;top:512px">m3/m2</div>
<div class="c" style="left:1378px;width:89px;text-align:right;top:512px">37</div>
<div class="c" style="left:1478px;width:70px;text-align:right;top:512px">345.877</div>
<div class="hl" style="left:0;top:575px;width:1642px"></div>
<div class="bx" style="left:66px;top:552px"></div>
<div class="nm" style="left:85px;top:548px">建筑工程</div>
<div class="c" style="left:358px;width:180px;text-align:center;top:548px">0.333~194.966</div>
<div class="c" style="left:538px;width:89px;text-align:right;top:548px">38.801</div>
<div class="c" style="left:638px;width:89px;text-align:right;top:548px">40.283</div>
<div class="c" style="left:738px;width:80px;text-align:center;top:548px">元/m2</div>
<div class="c" style="left:818px;width:89px;text-align:right;top:548px">30</div>
<div class="c" style="left:918px;width:180px;text-align:center;top:548px">~</div>
<div class="c" style="left:1378px;width:89px;text-align:right;top:548px">0</div>
<div class="abs" style="left:1538px;top:0;width:8px;height:567px;background:linear-gradient(90deg,rgba(0,0,0,0),rgba(0,0,0,.10))"></div>
<div class="abs" style="left:1546px;top:0;width:80px;height:567px;background:#fff;border-right:1px solid #dfe7f7"></div>
<div class="abs" style="left:1546px;top:0;width:80px;height:71px;background:#f9fafd;border-bottom:1px solid #dfe7f7;border-right:1px solid #dfe7f7"></div>
<div class="hc" style="left:1546px;width:79px;top:27px">操作</div>
<div class="hl" style="left:1546px;top:107px;width:80px"></div>
<svg class="abs" style="left:1577px;top:85px" width="11" height="10" viewBox="0 0 11 10"><rect x="0" y="4.2" width="2.3" height="5.6" fill="#3d5cf6"/><rect x="4" y="0" width="2.2" height="9.8" fill="#0b5ffe"/><rect x="8" y="2.8" width="2.2" height="7" fill="#0a86ff"/></svg>
<div class="hl" style="left:1546px;top:143px;width:80px"></div>
<svg class="abs" style="left:1577px;top:121px" width="11" height="10" viewBox="0 0 11 10"><rect x="0" y="4.2" width="2.3" height="5.6" fill="#3d5cf6"/><rect x="4" y="0" width="2.2" height="9.8" fill="#0b5ffe"/><rect x="8" y="2.8" width="2.2" height="7" fill="#0a86ff"/></svg>
<div class="hl" style="left:1546px;top:179px;width:80px"></div>
<svg class="abs" style="left:1577px;top:157px" width="11" height="10" viewBox="0 0 11 10"><rect x="0" y="4.2" width="2.3" height="5.6" fill="#3d5cf6"/><rect x="4" y="0" width="2.2" height="9.8" fill="#0b5ffe"/><rect x="8" y="2.8" width="2.2" height="7" fill="#0a86ff"/></svg>
<div class="hl" style="left:1546px;top:215px;width:80px"></div>
<svg class="abs" style="left:1577px;top:193px" width="11" height="10" viewBox="0 0 11 10"><rect x="0" y="4.2" width="2.3" height="5.6" fill="#3d5cf6"/><rect x="4" y="0" width="2.2" height="9.8" fill="#0b5ffe"/><rect x="8" y="2.8" width="2.2" height="7" fill="#0a86ff"/></svg>
<div class="hl" style="left:1546px;top:251px;width:80px"></div>
<svg class="abs" style="left:1577px;top:229px" width="11" height="10" viewBox="0 0 11 10"><rect x="0" y="4.2" width="2.3" height="5.6" fill="#3d5cf6"/><rect x="4" y="0" width="2.2" height="9.8" fill="#0b5ffe"/><rect x="8" y="2.8" width="2.2" height="7" fill="#0a86ff"/></svg>
<div class="hl" style="left:1546px;top:287px;width:80px"></div>
<svg class="abs" style="left:1577px;top:265px" width="11" height="10" viewBox="0 0 11 10"><rect x="0" y="4.2" width="2.3" height="5.6" fill="#3d5cf6"/><rect x="4" y="0" width="2.2" height="9.8" fill="#0b5ffe"/><rect x="8" y="2.8" width="2.2" height="7" fill="#0a86ff"/></svg>
<div class="hl" style="left:1546px;top:323px;width:80px"></div>
<svg class="abs" style="left:1577px;top:301px" width="11" height="10" viewBox="0 0 11 10"><rect x="0" y="4.2" width="2.3" height="5.6" fill="#3d5cf6"/><rect x="4" y="0" width="2.2" height="9.8" fill="#0b5ffe"/><rect x="8" y="2.8" width="2.2" height="7" fill="#0a86ff"/></svg>
<div class="hl" style="left:1546px;top:359px;width:80px"></div>
<svg class="abs" style="left:1577px;top:337px" width="11" height="10" viewBox="0 0 11 10"><rect x="0" y="4.2" width="2.3" height="5.6" fill="#3d5cf6"/><rect x="4" y="0" width="2.2" height="9.8" fill="#0b5ffe"/><rect x="8" y="2.8" width="2.2" height="7" fill="#0a86ff"/></svg>
<div class="hl" style="left:1546px;top:395px;width:80px"></div>
<svg class="abs" style="left:1577px;top:373px" width="11" height="10" viewBox="0 0 11 10"><rect x="0" y="4.2" width="2.3" height="5.6" fill="#3d5cf6"/><rect x="4" y="0" width="2.2" height="9.8" fill="#0b5ffe"/><rect x="8" y="2.8" width="2.2" height="7" fill="#0a86ff"/></svg>
<div class="hl" style="left:1546px;top:431px;width:80px"></div>
<svg class="abs" style="left:1577px;top:409px" width="11" height="10" viewBox="0 0 11 10"><rect x="0" y="4.2" width="2.3" height="5.6" fill="#3d5cf6"/><rect x="4" y="0" width="2.2" height="9.8" fill="#0b5ffe"/><rect x="8" y="2.8" width="2.2" height="7" fill="#0a86ff"/></svg>
<div class="hl" style="left:1546px;top:467px;width:80px"></div>
<svg class="abs" style="left:1577px;top:445px" width="11" height="10" viewBox="0 0 11 10"><rect x="0" y="4.2" width="2.3" height="5.6" fill="#3d5cf6"/><rect x="4" y="0" width="2.2" height="9.8" fill="#0b5ffe"/><rect x="8" y="2.8" width="2.2" height="7" fill="#0a86ff"/></svg>
<div class="hl" style="left:1546px;top:503px;width:80px"></div>
<svg class="abs" style="left:1577px;top:481px" width="11" height="10" viewBox="0 0 11 10"><rect x="0" y="4.2" width="2.3" height="5.6" fill="#3d5cf6"/><rect x="4" y="0" width="2.2" height="9.8" fill="#0b5ffe"/><rect x="8" y="2.8" width="2.2" height="7" fill="#0a86ff"/></svg>
<div class="hl" style="left:1546px;top:539px;width:80px"></div>
<svg class="abs" style="left:1577px;top:517px" width="11" height="10" viewBox="0 0 11 10"><rect x="0" y="4.2" width="2.3" height="5.6" fill="#3d5cf6"/><rect x="4" y="0" width="2.2" height="9.8" fill="#0b5ffe"/><rect x="8" y="2.8" width="2.2" height="7" fill="#0a86ff"/></svg>
<div class="hl" style="left:1546px;top:575px;width:80px"></div>
<svg class="abs" style="left:1577px;top:553px" width="11" height="10" viewBox="0 0 11 10"><rect x="0" y="4.2" width="2.3" height="5.6" fill="#3d5cf6"/><rect x="4" y="0" width="2.2" height="9.8" fill="#0b5ffe"/><rect x="8" y="2.8" width="2.2" height="7" fill="#0a86ff"/></svg>
<div class="abs" style="left:1626px;top:0;width:16px;height:71px;background:#f9fafd"></div>
<div class="abs" style="left:1626px;top:71px;width:16px;height:500px;background:#f1f1f1"></div>
<svg class="abs" style="left:1628px;top:77px" width="12" height="8" viewBox="0 0 12 8"><path d="M2 6 L6 2 L10 6 Z" fill="#a3a3a3"/></svg>
<div class="abs" style="left:1628px;top:89px;width:13px;height:52px;background:#c1c1c1"></div>
<div class="abs" style="left:1641px;top:0;width:1px;height:567px;background:#dde6f8"></div>
<div class="abs" style="left:0;top:0;width:1642px;height:1px;background:#d6e2f8"></div>
</div>
</body></html>
